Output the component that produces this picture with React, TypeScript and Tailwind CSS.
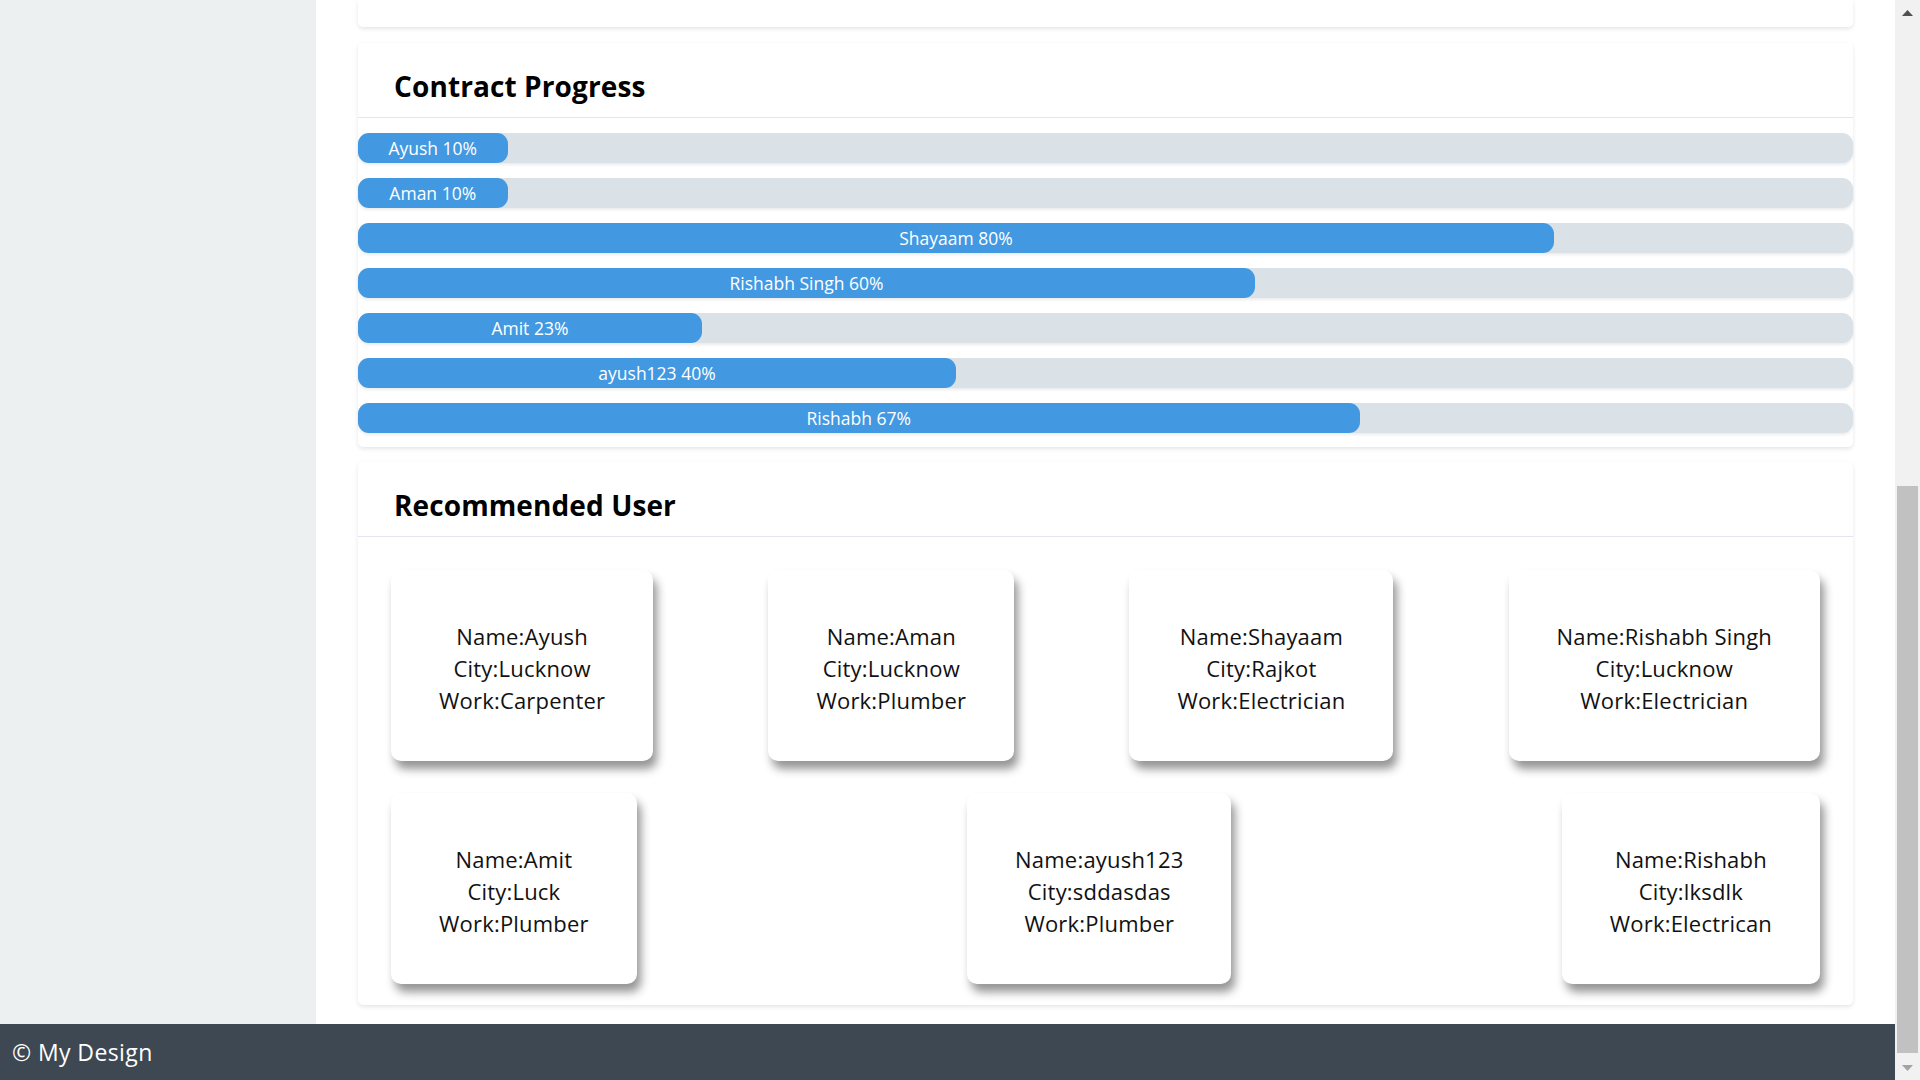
import React from "react";

const progress = [
  { name: "Ayush", pct: 10 },
  { name: "Aman", pct: 10 },
  { name: "Shayaam", pct: 80 },
  { name: "Rishabh Singh", pct: 60 },
  { name: "Amit", pct: 23 },
  { name: "ayush123", pct: 40 },
  { name: "Rishabh", pct: 67 },
];

const users = [
  { name: "Ayush", city: "Lucknow", work: "Carpenter" },
  { name: "Aman", city: "Lucknow", work: "Plumber" },
  { name: "Shayaam", city: "Rajkot", work: "Electrician" },
  { name: "Rishabh Singh", city: "Lucknow", work: "Electrician" },
  { name: "Amit", city: "Luck", work: "Plumber" },
  { name: "ayush123", city: "sddasdas", work: "Plumber" },
  { name: "Rishabh", city: "lksdlk", work: "Electrican" },
];

function UserCard({ u }: { u: (typeof users)[number] }) {
  return (
    <div className="bg-white rounded-[10px] px-12 pt-[50px] pb-[45px] text-center text-[22px] leading-[32px] tracking-[0.2px] text-[#111] shadow-[4px_8px_10px_rgba(0,0,0,0.42)]">
      <div>Name:{u.name}</div>
      <div>City:{u.city}</div>
      <div>Work:{u.work}</div>
    </div>
  );
}

function CardHeader({ title }: { title: string }) {
  return (
    <div className="pl-[36px] pt-[24px] pb-[12px] border-b border-[#e3e6ef]">
      <h2 className="text-[28px] leading-[38px] font-bold tracking-[0.1px] text-black">{title}</h2>
    </div>
  );
}

export default function App() {
  return (
    <div
      className="flex w-full h-[1080px] overflow-hidden bg-white"
      style={{ fontFamily: '"Open Sans", "Noto Sans", sans-serif' }}
    >
      <div className="flex-1 flex flex-col min-w-0">
        <div className="flex flex-1 min-h-0">
          <aside className="w-[316px] shrink-0 bg-[#ecf0f1]" />
          <main className="flex-1 flex flex-col px-[42px] bg-white">
            <div className="h-[27px] bg-white rounded-b-[5px] shadow-[0_2px_4px_rgba(0,0,0,0.1)]" />

            <section className="mt-[16px] bg-white rounded-[5px] shadow-[0_2px_4px_rgba(0,0,0,0.1)]">
              <CardHeader title="Contract Progress" />
              <div className="flex flex-col gap-[15px] pt-[15px] pb-[14px]">
                {progress.map((p) => (
                  <div
                    key={p.name}
                    className="h-[30px] rounded-[11px] bg-[#dae1e7] shadow-[0_2px_3px_rgba(0,0,0,0.08)] flex"
                  >
                    <div
                      className="h-full rounded-[11px] bg-[#4299e1] flex items-center justify-center text-white text-[17.5px] whitespace-nowrap"
                      style={{ width: `${p.pct}%` }}
                    >
                      {p.name} {p.pct}%
                    </div>
                  </div>
                ))}
              </div>
            </section>

            <section className="mt-[15px] bg-white rounded-[5px] shadow-[0_2px_4px_rgba(0,0,0,0.1)]">
              <CardHeader title="Recommended User" />
              <div className="flex flex-col gap-[32px] px-[33px] pt-[33px] pb-[21px]">
                <div className="flex justify-between items-start">
                  {users.slice(0, 4).map((u) => (
                    <UserCard key={u.name} u={u} />
                  ))}
                </div>
                <div className="flex justify-between items-start">
                  {users.slice(4).map((u) => (
                    <UserCard key={u.name} u={u} />
                  ))}
                </div>
              </div>
            </section>
          </main>
        </div>
        <footer className="h-[56px] shrink-0 bg-[#3d4852] flex items-center pl-[12px] text-white text-[23px] tracking-[0.4px]">
          © My Design
        </footer>
      </div>

      <div className="w-[25px] shrink-0 bg-[#f1f1f1] flex flex-col">
        <div className="h-[25px] flex items-center justify-center">
          <svg width="11" height="6" viewBox="0 0 11 6">
            <polygon points="5.5,0 11,6 0,6" fill="#505050" />
          </svg>
        </div>
        <div className="h-[461px]" />
        <div className="h-[567px] ml-[2px] w-[21px] bg-[#c1c1c1]" />
        <div className="flex-1" />
        <div className="h-[25px] flex items-center justify-center">
          <svg width="11" height="6" viewBox="0 0 11 6">
            <polygon points="0,0 11,0 5.5,6" fill="#a3a3a3" />
          </svg>
        </div>
      </div>
    </div>
  );
}
